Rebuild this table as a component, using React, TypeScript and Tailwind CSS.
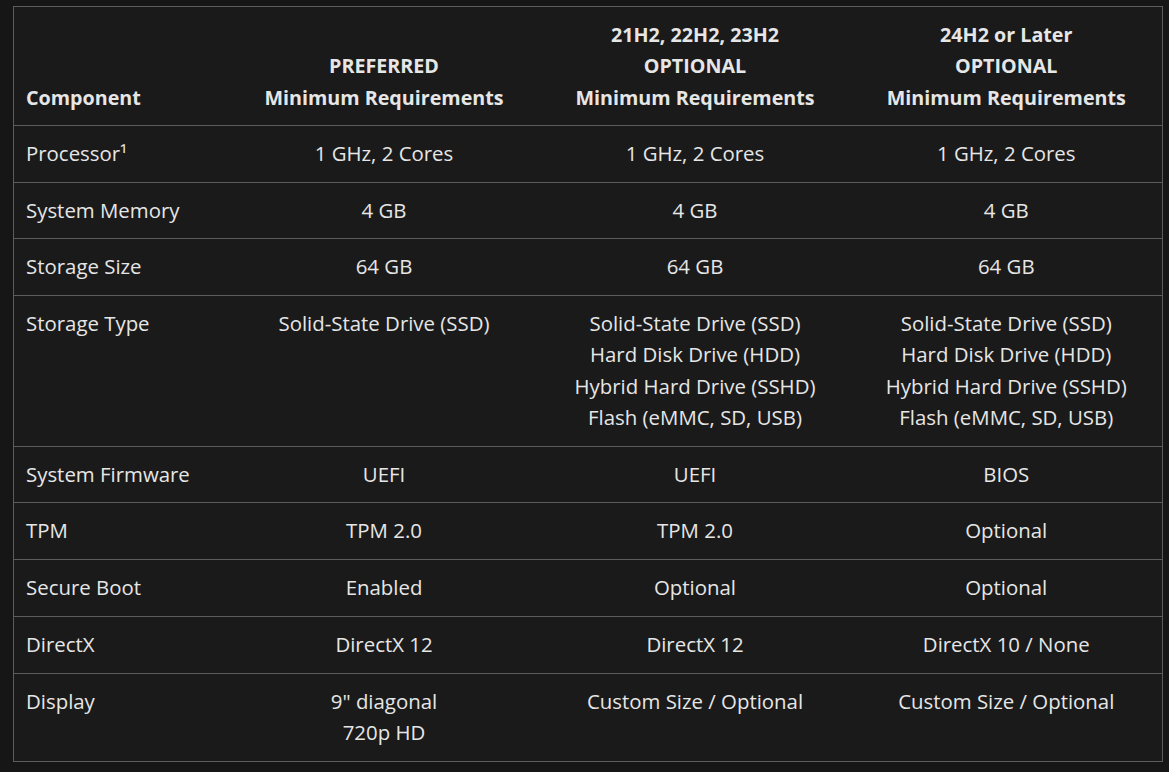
import React from "react";

const rows: { label: React.ReactNode; cells: string[][] }[] = [
  { label: "Processor¹", cells: [["1 GHz, 2 Cores"], ["1 GHz, 2 Cores"], ["1 GHz, 2 Cores"]] },
  { label: "System Memory", cells: [["4 GB"], ["4 GB"], ["4 GB"]] },
  { label: "Storage Size", cells: [["64 GB"], ["64 GB"], ["64 GB"]] },
  {
    label: "Storage Type",
    cells: [
      ["Solid-State Drive (SSD)"],
      ["Solid-State Drive (SSD)", "Hard Disk Drive (HDD)", "Hybrid Hard Drive (SSHD)", "Flash (eMMC, SD, USB)"],
      ["Solid-State Drive (SSD)", "Hard Disk Drive (HDD)", "Hybrid Hard Drive (SSHD)", "Flash (eMMC, SD, USB)"],
    ],
  },
  { label: "System Firmware", cells: [["UEFI"], ["UEFI"], ["BIOS"]] },
  { label: "TPM", cells: [["TPM 2.0"], ["TPM 2.0"], ["Optional"]] },
  { label: "Secure Boot", cells: [["Enabled"], ["Optional"], ["Optional"]] },
  { label: "DirectX", cells: [["DirectX 12"], ["DirectX 12"], ["DirectX 10 / None"]] },
  { label: "Display", cells: [["9\" diagonal", "720p HD"], ["Custom Size / Optional"], ["Custom Size / Optional"]] },
];

const headers: string[][] = [
  ["PREFERRED", "Minimum Requirements"],
  ["21H2, 22H2, 23H2", "OPTIONAL", "Minimum Requirements"],
  ["24H2 or Later", "OPTIONAL", "Minimum Requirements"],
];

export default function App() {
  return (
    <div
      className="min-h-[772px] w-full bg-[#161616] pt-[6px] pl-[13px] text-[#e6e6e6]"
      style={{ fontFamily: '"Open Sans", "Noto Sans", sans-serif' }}
    >
      <table className="w-[1149px] table-fixed border-collapse border border-[#5c5c5c] bg-[#1a1a1a] text-[20.4px] leading-[31.25px]">
        <colgroup>
          <col className="w-[215px]" />
          <col className="w-[311px]" />
          <col className="w-[311px]" />
          <col className="w-[312px]" />
        </colgroup>
        <thead>
          <tr className="border-b border-[#5c5c5c]">
            <th className="px-[12px] pt-[12px] pb-[12px] text-left align-bottom text-[19.7px] font-bold">Component</th>
            {headers.map((h, i) => (
              <th key={i} className="px-[12px] pt-[12px] pb-[12px] text-center align-bottom text-[19.7px] font-bold">
                {h.map((l, j) => (
                  <div key={j}>{l}</div>
                ))}
              </th>
            ))}
          </tr>
        </thead>
        <tbody>
          {rows.map((r, i) => (
            <tr key={i} className="border-b border-[#5c5c5c]">
              <td className="px-[12px] pt-[12px] pb-[12.5px] text-left align-top">{r.label}</td>
              {r.cells.map((c, j) => (
                <td key={j} className="px-[12px] pt-[12px] pb-[12.5px] text-center align-top">
                  {c.map((l, k) => (
                    <div key={k}>{l}</div>
                  ))}
                </td>
              ))}
            </tr>
          ))}
        </tbody>
      </table>
    </div>
  );
}
